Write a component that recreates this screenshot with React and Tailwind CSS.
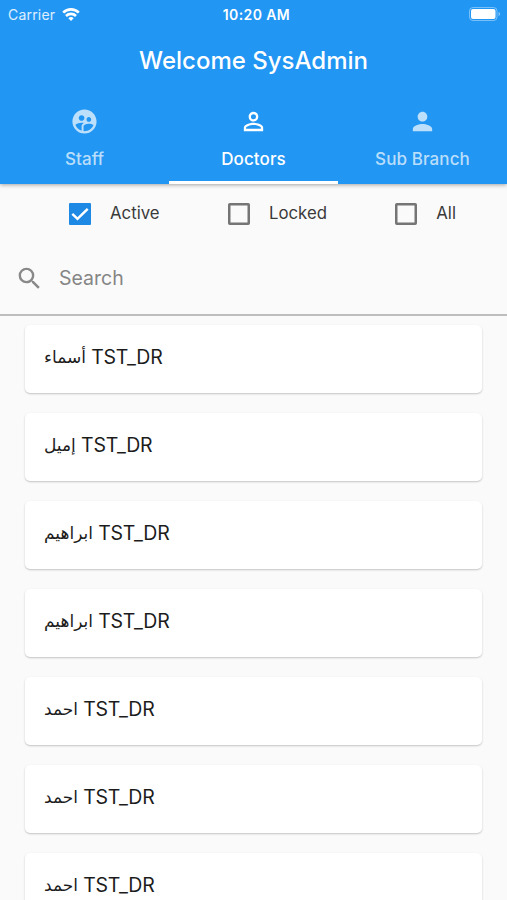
import { useState } from 'react'
import { MdPerson, MdPersonOutline, MdSearch, MdSupervisedUserCircle } from 'react-icons/md'

const TABS = [
  { label: 'Staff', Icon: MdSupervisedUserCircle },
  { label: 'Doctors', Icon: MdPersonOutline },
  { label: 'Sub Branch', Icon: MdPerson },
]

const DOCTORS = [
  { id: 1, first: 'أسماء', last: 'TST_DR' },
  { id: 2, first: 'إميل', last: 'TST_DR' },
  { id: 3, first: 'ابراهيم', last: 'TST_DR' },
  { id: 4, first: 'ابراهيم', last: 'TST_DR' },
  { id: 5, first: 'احمد', last: 'TST_DR' },
  { id: 6, first: 'احمد', last: 'TST_DR' },
  { id: 7, first: 'احمد', last: 'TST_DR' },
]

function StatusBar() {
  return (
    <div className="grid h-7 grid-cols-3 items-center pr-1.5 pl-2">
      <div className="flex items-center gap-[7px] text-[14px] tracking-[0.2px] text-white/85">
        <span>Carrier</span>
        <svg className="h-[13px] w-[18px]" viewBox="0 0 18 13" fill="none" stroke="white" strokeWidth="2.6">
          <path d="M1.2 4.6a11 11 0 0 1 15.6 0" />
          <path d="M4 8a7 7 0 0 1 10 0" />
          <path d="M9 13 6.300 10.300a3.800 3.800 0 0 1 5.400 0Z" fill="white" stroke="none" />
        </svg>
      </div>
      <div className="pl-1 text-center text-[14px] font-semibold tracking-[0.4px] whitespace-nowrap">10:20 AM</div>
      <svg className="h-[14px] w-[32px] justify-self-end" viewBox="0 0 32 14" fill="none">
        <rect x="0.5" y="0.5" width="27.5" height="13" rx="3.5" stroke="white" strokeOpacity="0.4" />
        <rect x="2" y="2" width="24.5" height="10" rx="2" fill="white" />
        <path d="M29.5 5v4c1-.3 1.6-1.1 1.6-2s-.6-1.7-1.6-2Z" fill="white" fillOpacity="0.45" />
      </svg>
    </div>
  )
}

function Checkbox({ label, checked, onChange }) {
  return (
    <label className="flex cursor-pointer items-center gap-[19px]">
      <input type="checkbox" className="sr-only" checked={checked} onChange={onChange} />
      <svg className="h-[22px] w-[22px]" viewBox="0 0 22 22" fill="none" strokeWidth="2.5">
        {checked ? (
          <>
            <rect width="22" height="22" rx="1" fill="#1e88e5" />
            <path d="M3.300 10.800 8.500 15.800 18.700 5.800" stroke="white" />
          </>
        ) : (
          <rect x="1.250" y="1.250" width="19.500" height="19.500" rx="0.5" stroke="#757575" />
        )}
      </svg>
      <span className="pt-px text-[16.800px] text-[#3a3a3a]">{label}</span>
    </label>
  )
}

export default function App() {
  const [activeTab, setActiveTab] = useState('Doctors')
  const [filter, setFilter] = useState('Active')

  return (
    <div className="flex h-[900px] w-[507px] flex-col overflow-hidden bg-[#fafafa] font-[Inter,sans-serif]">
      <header className="relative z-10 flex h-[184px] shrink-0 flex-col bg-[#2196f3] text-white shadow-[0_1px_4px_rgba(0,0,0,0.35)]">
        <StatusBar />
        <h1 className="flex h-16 items-center justify-center pt-px text-[24px] font-medium">
          Welcome SysAdmin
        </h1>
        <nav className="grid flex-1 grid-cols-3">
          {TABS.map(({ label, Icon }) => (
            <button
              key={label}
              onClick={() => setActiveTab(label)}
              className={`flex flex-col items-center border-b-3 pt-[15px] ${
                activeTab === label ? 'border-white text-white' : 'border-transparent text-white/70'
              }`}
            >
              <Icon className="h-[29px] w-[29px]" />
              <span className="mt-[11px] text-[17px] leading-6 font-medium tracking-[0.1px]">{label}</span>
            </button>
          ))}
        </nav>
      </header>

      {/* Status filters */}
      <div className="flex h-[59px] shrink-0 items-center justify-between pr-[51px] pl-[69px]">
        {['Active', 'Locked', 'All'].map((name) => (
          <Checkbox key={name} label={name} checked={filter === name} onChange={() => setFilter(name)} />
        ))}
      </div>

      <div className="flex h-[73px] shrink-0 items-center gap-[15px] border-b-2 border-[#bdbdbd] pl-[15px]">
        <MdSearch className="h-[29px] w-[29px] text-[#898989]" />
        <input
          placeholder="Search"
          className="w-96 bg-transparent pt-px text-[19.500px] text-[#333] outline-none placeholder:text-[#858585]"
        />
      </div>

      <ul className="flex flex-col gap-5 px-[25px] pt-[9px]">
        {DOCTORS.map((doctor) => (
          <li
            key={doctor.id}
            className="flex h-[68px] shrink-0 items-center rounded-[5px] bg-white pb-0.5 pl-[19px] text-[19.500px] tracking-[-0.25px] whitespace-pre text-[#1c1c1c] shadow-[0_1px_2px_rgba(0,0,0,0.22)]"
          >
            <span className="font-['DejaVu_Sans',sans-serif] text-[17px] tracking-normal">{doctor.first}</span>
            <span> {doctor.last}</span>
          </li>
        ))}
      </ul>
    </div>
  )
}
